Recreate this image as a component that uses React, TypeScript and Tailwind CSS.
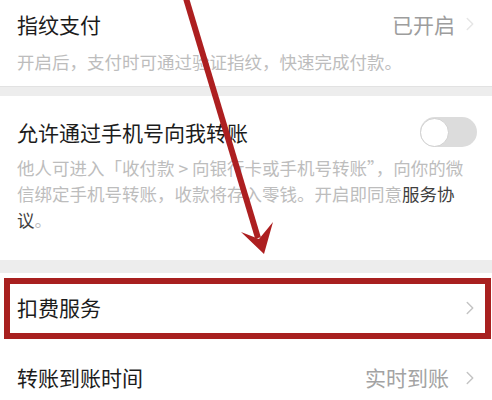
import { ChevronRight } from "lucide-react"

const font = { fontFamily: '"Noto Sans CJK SC", "Noto Sans", sans-serif' }

function Toggle() {
  return (
    <div className="w-[57px] h-[30px] rounded-full bg-[#dcdcdc] flex items-center -mr-[2px]">
      <div className="w-[29px] h-[29px] rounded-full bg-white border border-[#d0d0d0]" />
    </div>
  )
}

export default function App() {
  return (
    <div className="relative w-[492px] h-[400px] overflow-hidden bg-white" style={font}>
      {/* Fingerprint pay */}
      <div className="px-[17px] pt-[9px] pb-[11px]">
        <div className="flex items-center justify-between h-[30px]">
          <span className="text-[21px] text-[#1c1c1c] leading-[30px]">指纹支付</span>
          <div className="flex items-center">
            <span className="text-[21px] text-[#9d9d9d] leading-[30px]">已开启</span>
            <ChevronRight className="w-[22px] h-[22px] text-[#e6e6e6] ml-[4px] -mr-[6px]" strokeWidth={1.6} />
          </div>
        </div>
        <p className="mt-[10px] text-[17.5px] leading-[26px] text-[#bdbdbd] whitespace-nowrap">
          开启后，支付时可通过验证指纹，快速完成付款。
        </p>
      </div>

      <div className="h-[10px] bg-[#ededed] border-t border-[#e2e2e2]" />

      {/* Transfer by phone */}
      <div className="px-[17px] pt-[21px] pb-[27px]">
        <div className="flex items-center justify-between h-[30px]">
          <span className="text-[21px] text-[#1c1c1c] leading-[30px]">允许通过手机号向我转账</span>
          <Toggle />
        </div>
        <p className="mt-[8px] text-[17.5px] leading-[26px] text-[#bdbdbd] whitespace-nowrap">
          他人可进入「收付款 &gt; 向银行卡或手机号转账”，向你的微
          <br />
          信绑定手机号转账，收款将存入零钱。开启即同意<span className="text-[#3f3f3f]">服务协</span>
          <br />
          <span className="text-[#3f3f3f]">议</span>。
        </p>
      </div>

      <div className="h-[13px] bg-[#ededed]" />

      {/* Deduction service */}
      <div className="relative">
        <div className="flex items-center justify-between h-[70px] px-[17px]">
          <span className="text-[21px] text-[#1c1c1c]">扣费服务</span>
          <ChevronRight className="w-[22px] h-[22px] text-[#c4c4c4] -mr-[6px]" strokeWidth={1.6} />
        </div>
        <div className="absolute left-[4px] right-[1px] top-[5px] h-[61px] border-[6px] border-[#a8201f]" />
      </div>

      <div className="flex items-center justify-between h-[70px] px-[17px]">
        <span className="text-[21px] text-[#1c1c1c]">转账到账时间</span>
        <div className="flex items-center">
          <span className="text-[21px] text-[#a3a3a3]">实时到账</span>
          <ChevronRight className="w-[22px] h-[22px] text-[#c4c4c4] ml-[10px] -mr-[6px]" strokeWidth={1.6} />
        </div>
      </div>

      {/* Annotation arrow */}
      <svg className="absolute left-0 top-0 pointer-events-none" width="492" height="400" viewBox="0 0 492 400">
        <line x1="185" y1="-5" x2="258" y2="238" stroke="#ad1f20" strokeWidth="6" />
        <polygon points="264,254 241,232 259,239 273,222" fill="#ad1f20" />
      </svg>
    </div>
  )
}
